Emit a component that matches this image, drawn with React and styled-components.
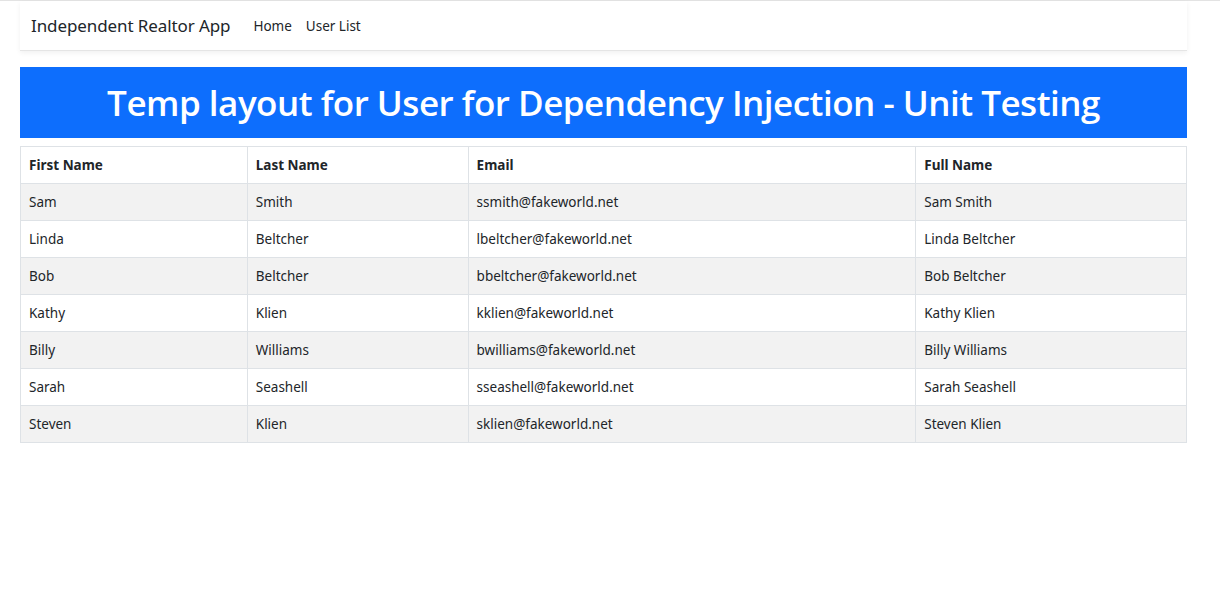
import React from "react";
import styled, { createGlobalStyle } from "styled-components";

const Global = createGlobalStyle`
  html, body { margin: 0; padding: 0; background: #fff; }
  body {
    font-family: "Segoe UI", "Noto Sans", "Open Sans", sans-serif;
    color: #212529;
    font-size: 14px;
  }
`;

const TopLine = styled.div`
  height: 1px;
  background: #e3e3e3;
`;

const Page = styled.div`
  width: 1167px;
  padding-left: 20px;
`;

const Nav = styled.nav`
  height: 49px;
  display: flex;
  align-items: center;
  background: #fff;
  border-bottom: 1px solid #e5e5e5;
  box-shadow: 0 2px 5px rgba(0, 0, 0, 0.06);
  padding-left: 11px;
`;

const Brand = styled.a`
  font-size: 17px;
  color: #212529;
  margin-right: 23px;
  text-decoration: none;
  letter-spacing: -0.1px;
`;

const NavLink = styled.a`
  font-size: 13.5px;
  color: #212529;
  margin-right: 14px;
  text-decoration: none;
`;

const Banner = styled.h1`
  margin: 16px 0 8px;
  height: 71px;
  background: #0d6efd;
  color: #fff;
  display: flex;
  align-items: center;
  justify-content: center;
  font-family: "Open Sans", "Noto Sans", sans-serif;
  font-size: 35px;
  font-weight: 600;
  letter-spacing: -0.5px;
`;

const Table = styled.table`
  width: 1167px;
  border-collapse: collapse;
  font-size: 13.5px;
`;

const Th = styled.th`
  text-align: left;
  font-weight: 700;
  height: 37px;
  padding: 0 8px;
  border: 1px solid #dee2e6;
  box-sizing: border-box;
  width: ${(p) => p.$w}px;
`;

const Tr = styled.tr`
  background: ${(p) => (p.$striped ? "#f2f2f2" : "#fff")};
`;

const Td = styled.td`
  height: 37px;
  padding: 0 8px;
  border: 1px solid #dee2e6;
  box-sizing: border-box;
`;

const cols = [
  { label: "First Name", w: 227 },
  { label: "Last Name", w: 221 },
  { label: "Email", w: 448 },
  { label: "Full Name", w: 271 },
];

const users = [
  ["Sam", "Smith", "ssmith@fakeworld.net"],
  ["Linda", "Beltcher", "lbeltcher@fakeworld.net"],
  ["Bob", "Beltcher", "bbeltcher@fakeworld.net"],
  ["Kathy", "Klien", "kklien@fakeworld.net"],
  ["Billy", "Williams", "bwilliams@fakeworld.net"],
  ["Sarah", "Seashell", "sseashell@fakeworld.net"],
  ["Steven", "Klien", "sklien@fakeworld.net"],
];

export default function App() {
  return (
    <>
      <Global />
      <TopLine />
      <Page>
        <Nav>
          <Brand href="#">Independent Realtor App</Brand>
          <NavLink href="#">Home</NavLink>
          <NavLink href="#">User List</NavLink>
        </Nav>
        <Banner>Temp layout for User for Dependency Injection - Unit Testing</Banner>
        <Table>
          <thead>
            <tr>
              {cols.map((c) => (
                <Th key={c.label} $w={c.w}>{c.label}</Th>
              ))}
            </tr>
          </thead>
          <tbody>
            {users.map((u, i) => (
              <Tr key={u[2]} $striped={i % 2 === 0}>
                <Td>{u[0]}</Td>
                <Td>{u[1]}</Td>
                <Td>{u[2]}</Td>
                <Td>{u[0] + " " + u[1]}</Td>
              </Tr>
            ))}
          </tbody>
        </Table>
      </Page>
    </>
  );
}
